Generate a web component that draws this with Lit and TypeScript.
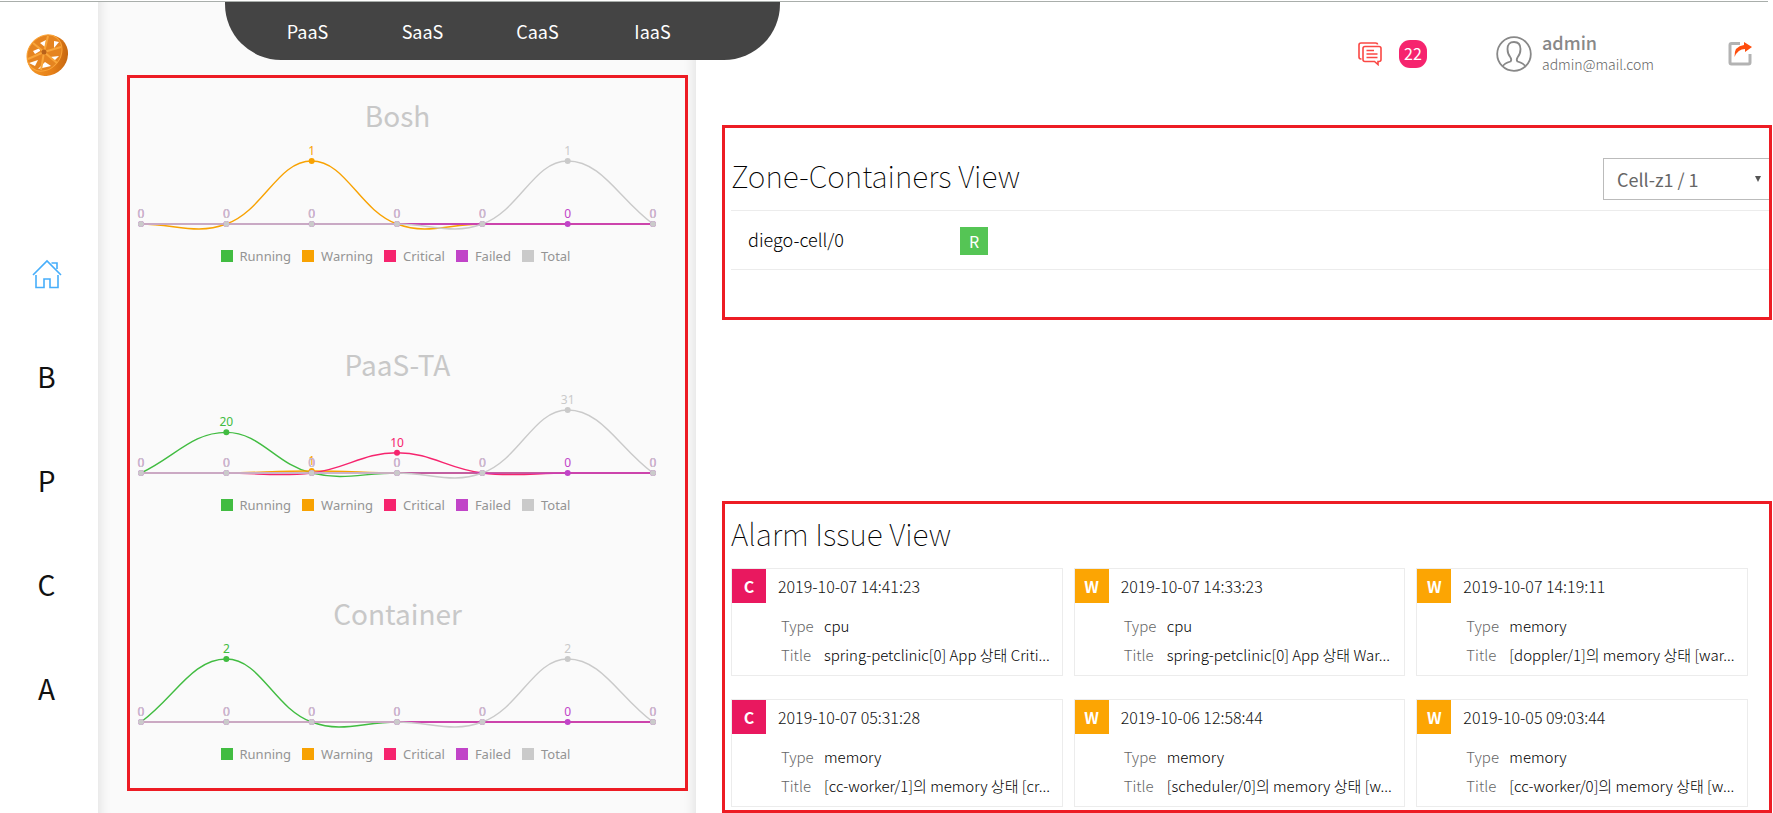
import { LitElement, html, svg, css } from "lit";
import { customElement, property } from "lit/decorators.js";

type Series = { name: string; color: string; values: number[] };
type Alarm = { level: "C" | "W"; time: string; type: string; title: string };

const COLORS: Record<string, string> = {
  Running: "#41bc41",
  Warning: "#f8a202",
  Critical: "#f6246e",
  Failed: "#c144c8",
  Total: "#cacaca",
};
const NAMES = Object.keys(COLORS);

/** Each status has its own slot on the axis; all other slots stay at zero. */
function buildSeries(counts: number[]): Series[] {
  return NAMES.map((name, i) => ({
    name,
    color: COLORS[name],
    values: [0, 1, 2, 3, 4, 5, 6].map((slot) => (slot === i + 1 ? counts[i] : 0)),
  }));
}

type Point = { x: number; y: number };

function splinePath(points: Point[], tension = 0.4): string {
  const controls = points.map((cur, i) => {
    const prev = points[i - 1] ?? cur;
    const next = points[i + 1] ?? cur;
    const before = Math.hypot(cur.x - prev.x, cur.y - prev.y);
    const after = Math.hypot(next.x - cur.x, next.y - cur.y);
    const fa = (tension * before) / (before + after);
    const fb = (tension * after) / (before + after);
    const dx = next.x - prev.x;
    const dy = next.y - prev.y;
    return {
      inX: cur.x - fa * dx,
      inY: cur.y - fa * dy,
      outX: cur.x + fb * dx,
      outY: cur.y + fb * dy,
    };
  });
  return points
    .map((p, i) =>
      i === 0
        ? `M${p.x} ${p.y}`
        : `C${controls[i - 1].outX} ${controls[i - 1].outY} ${controls[i].inX} ${controls[i].inY} ${p.x} ${p.y}`
    )
    .join("");
}

@customElement("status-chart")
export class StatusChart extends LitElement {
  @property() heading = "";
  @property({ attribute: false }) counts: number[] = [];

  static styles = css`
    :host {
      display: block;
      height: 249px;
      box-sizing: border-box;
      padding-top: 15px;
    }
    h2 {
      margin: 0;
      font-size: 28px;
      line-height: 44px;
      font-weight: 400;
      text-align: center;
      color: #c8c8c8;
    }
    .plot {
      display: block;
      width: 100%;
      font-family: "Noto Sans", sans-serif;
      font-size: 12px;
    }
    .legend {
      display: flex;
      justify-content: center;
      gap: 11px;
      margin: 0;
      padding: 0 4px 0 0;
      list-style: none;
      font-family: "Noto Sans", sans-serif;
      font-size: 13px;
      line-height: 20px;
      color: #949494;
    }
    .legend li {
      display: flex;
      align-items: center;
      gap: 7px;
    }
    .swatch {
      width: 12px;
      height: 12px;
    }
  `;

  render() {
    const series = buildSeries(this.counts);
    const max = Math.max(...this.counts, 1);
    const base = 87;
    const place = (values: number[]) =>
      values.map((v, i) => ({ x: 11 + (512 / 6) * i, y: base - (v / max) * 63 }));
    /* Zero markers of the first three series always lie under later ones. */
    const shown = (s: Series, row: number, i: number) => row > 2 || s.values[i] > 0;
    return html`
      <h2>${this.heading}</h2>
      <svg class="plot" viewBox="0 0 535 109" role="img" aria-label="${this.heading} status">
        ${series.map(
          (s) => svg`<path d=${splinePath(place(s.values))} fill="none" stroke=${s.color} stroke-width="1.4"></path>`
        )}
        ${series.map((s, row) =>
          place(s.values).map((p, i) =>
            shown(s, row, i)
              ? svg`<circle cx=${p.x} cy=${p.y} r="3" fill=${s.color}></circle>
                  <text x=${p.x} y=${p.y - 6} text-anchor="middle" fill=${s.color}>${s.values[i]}</text>`
              : null
          )
        )}
      </svg>
      <ul class="legend">
        ${series.map(
          (s) => html`<li><span class="swatch" style="background:${s.color}"></span>${s.name}</li>`
        )}
      </ul>
    `;
  }
}

@customElement("alarm-card")
export class AlarmCard extends LitElement {
  @property({ attribute: false }) alarm!: Alarm;

  static styles = css`
    :host {
      display: block;
      min-width: 0;
      border: 1px solid #ececec;
      height: 108px;
    }
    .head {
      display: flex;
      align-items: center;
      gap: 12px;
      font-size: 16px;
      line-height: 34px;
      font-weight: 300;
      color: #111;
    }
    .level {
      width: 34px;
      height: 34px;
      text-align: center;
      font-weight: 700;
      color: #fff;
      background: #fca503;
    }
    .level.critical {
      background: #e9185f;
    }
    dl {
      display: grid;
      grid-template-columns: 32px minmax(0, 1fr);
      column-gap: 11px;
      margin: 8px 4px 0 49px;
      font-size: 15px;
      line-height: 29px;
      font-weight: 300;
    }
    dt {
      color: #666;
    }
    dd {
      margin: 0;
      color: #000;
      overflow: hidden;
      white-space: nowrap;
    }
  `;

  render() {
    const a = this.alarm;
    return html`
      <div class="head">
        <span class="level ${a.level === "C" ? "critical" : ""}">${a.level}</span>
        <time>${a.time}</time>
      </div>
      <dl>
        <dt>Type</dt>
        <dd>${a.type}</dd>
        <dt>Title</dt>
        <dd>${a.title}</dd>
      </dl>
    `;
  }
}

const ALARMS: Alarm[] = [
  { level: "C", time: "2019-10-07 14:41:23", type: "cpu", title: "spring-petclinic[0] App 상태 Criti..." },
  { level: "W", time: "2019-10-07 14:33:23", type: "cpu", title: "spring-petclinic[0] App 상태 War..." },
  { level: "W", time: "2019-10-07 14:19:11", type: "memory", title: "[doppler/1]의 memory 상태 [war..." },
  { level: "C", time: "2019-10-07 05:31:28", type: "memory", title: "[cc-worker/1]의 memory 상태 [cr..." },
  { level: "W", time: "2019-10-06 12:58:44", type: "memory", title: "[scheduler/0]의 memory 상태 [w..." },
  { level: "W", time: "2019-10-05 09:03:44", type: "memory", title: "[cc-worker/0]의 memory 상태 [w..." },
];

@customElement("app-root")
export class AppRoot extends LitElement {
  static styles = css`
    :host {
      display: block;
      position: relative;
      font-family: "Noto Sans CJK KR", sans-serif;
      color: #222;
      background: #fff;
    }
    * {
      box-sizing: border-box;
    }
    a {
      color: inherit;
      text-decoration: none;
    }
    svg {
      display: block;
    }
    .edge {
      height: 2px;
      margin-right: 5px;
      border-bottom: 1px solid #a9aeab;
    }
    .layout {
      display: grid;
      grid-template-columns: 98px 598px minmax(0, 1fr);
      min-height: calc(100vh - 2px);
    }
    .rail {
      display: flex;
      flex-direction: column;
      align-items: center;
      padding: 32px 5px 0 0;
    }
    .logo {
      margin-bottom: 183px;
    }
    .rail nav {
      display: flex;
      flex-direction: column;
      align-items: center;
      gap: 64px;
      font-size: 28px;
      line-height: 40px;
      color: #111;
    }
    .home {
      height: 33px;
    }
    .charts {
      padding: 73px 8px 22px 29px;
      background: #fafafa;
      box-shadow: inset 14px 0 12px -12px rgba(0, 0, 0, 0.1), inset -14px 0 12px -12px rgba(0, 0, 0, 0.1);
    }
    .frame {
      border: 3px solid #ed1c24;
    }
    .charts .frame {
      height: 716px;
      padding-right: 20px;
    }
    .services {
      position: absolute;
      top: 2px;
      left: 225px;
      display: flex;
      height: 58px;
      padding: 0 70px 0 25px;
      border-radius: 0 0 56px 56px;
      background: #444;
      color: #fff;
      font-size: 18px;
      line-height: 58px;
      text-align: center;
    }
    .services a {
      width: 115px;
    }
    .main {
      padding: 0 1px 0 26px;
    }
    header {
      display: flex;
      align-items: center;
      justify-content: flex-end;
      height: 123px;
      padding: 0 19px 20px 0;
    }
    .messages {
      display: flex;
      align-items: center;
      gap: 17px;
      margin-right: 69px;
    }
    .count {
      width: 28px;
      height: 28px;
      border-radius: 11px;
      background: #f6246e;
      color: #fff;
      font-size: 16px;
      line-height: 27px;
      text-align: center;
    }
    .user {
      display: flex;
      align-items: center;
      gap: 10px;
      margin-right: 74px;
      color: #888;
    }
    .account {
      padding-bottom: 3px;
    }
    .name {
      font-size: 18px;
      line-height: 24px;
      font-weight: 500;
    }
    .mail {
      font-size: 14px;
      line-height: 20px;
      font-weight: 300;
      color: #666;
    }
    .zone {
      height: 195px;
      margin-bottom: 181px;
      padding: 30px 0 0 6px;
    }
    .title-row {
      display: flex;
      align-items: flex-start;
      justify-content: space-between;
      height: 52px;
    }
    h1 {
      margin: 0;
      font-size: 30px;
      line-height: 34px;
      font-weight: 100;
      color: #000;
    }
    select {
      appearance: none;
      width: 166px;
      height: 42px;
      padding: 0 30px 0 13px;
      border: 1px solid #bbb;
      border-right: 0;
      border-radius: 0;
      background: transparent;
      font-family: inherit;
      font-size: 18px;
      color: #666;
    }
    .select {
      display: grid;
      align-items: center;
    }
    .select > * {
      grid-area: 1 / 1;
    }
    .arrow {
      justify-self: end;
      margin-right: 8px;
      pointer-events: none;
    }
    table {
      width: 100%;
      border-collapse: collapse;
    }
    tr {
      border-top: 1px solid #ececec;
      border-bottom: 1px solid #ececec;
    }
    td {
      height: 59px;
      padding: 2px 0 0;
      font-size: 18px;
      font-weight: 300;
      color: #000;
    }
    .cell-name {
      width: 229px;
      padding: 0 0 2px 17px;
    }
    .badge {
      display: block;
      width: 28px;
      height: 28px;
      background: #55c555;
      color: #fff;
      font-size: 16px;
      line-height: 28px;
      font-weight: 400;
      text-align: center;
    }
    .alarms {
      height: 312px;
      padding: 12px 21px 0 6px;
    }
    .cards {
      display: grid;
      grid-template-columns: repeat(3, minmax(0, 1fr));
      gap: 23px 11px;
      margin-top: 18px;
    }
  `;

  render() {
    return html`
      <div class="edge"></div>
      <div class="layout">
        <aside class="rail">
          <a class="logo" href="#" aria-label="Main page">${this.logo()}</a>
          <nav>
            <a class="home" href="#" aria-label="Home">
              <svg width="30" height="30" viewBox="0 0 30 30" fill="none" stroke="#47aefb" stroke-width="1.6">
                <path d="M1 16 15 2 29 16"></path>
                <path d="M4 16V28.500H12V20H18V28.500H26V16"></path>
                <path d="M19.500 4H25V10"></path>
              </svg>
            </a>
            <a href="#">B</a>
            <a href="#">P</a>
            <a href="#">C</a>
            <a href="#">A</a>
          </nav>
        </aside>
        <section class="charts">
          <div class="frame">
            <status-chart heading="Bosh" .counts=${[0, 1, 0, 0, 1]}></status-chart>
            <status-chart heading="PaaS-TA" .counts=${[20, 1, 10, 0, 31]}></status-chart>
            <status-chart heading="Container" .counts=${[2, 0, 0, 0, 2]}></status-chart>
          </div>
        </section>
        <main class="main">
          <header>
            <div class="messages">
              <svg width="24" height="24" viewBox="0 0 24 24" fill="none" stroke="#fa4844" stroke-width="1.6">
                <path d="M3.500 17H3Q1 17 1 15V3Q1 1 3 1H17.500Q19.500 1 19.500 2.500"></path>
                <path d="M7 4.500H21Q23 4.500 23 6.500V17.500Q23 19.500 21 19.500H20V22.500L16.500 19.500H7Q5 19.500 5 17.500V6.500Q5 4.500 7 4.500Z"></path>
                <path d="M8.500 8.500H16M8.500 12H19.500M8.500 15.500H19.500"></path>
              </svg>
              <span class="count">22</span>
            </div>
            <div class="user">
              <svg width="36" height="36" viewBox="0 0 36 36" fill="none" stroke="#888" stroke-width="1.8">
                <circle cx="18" cy="18" r="16.800"></circle>
                <path d="M7 30Q8 27.500 14.500 25.500Q16 24 14.500 21.500Q11.500 18 11.500 13Q11.500 6 18 6Q24.500 6 24.500 13Q24.500 18 21.500 21.500Q20 24 21.500 25.500Q28 27.500 29 30"></path>
              </svg>
              <div class="account">
                <div class="name">admin</div>
                <div class="mail">admin@mail.com</div>
              </div>
            </div>
            <a href="#" aria-label="Log out">
              <svg width="25" height="25" viewBox="0 0 25 25">
                <path d="M12 2.500H3.500Q2 2.500 2 4V21.500Q2 23 3.500 23H20.500Q22 23 22 21.500V13" fill="none" stroke="#b3b3b3" stroke-width="3"></path>
                <path d="M16 1 24 6 17 11V8Q10 8 6.500 16Q6 5 16 4Z" fill="#ff4d0d"></path>
              </svg>
            </a>
          </header>
          <section class="frame zone">
            <div class="title-row">
              <h1>Zone-Containers View</h1>
              <div class="select">
                <select aria-label="Zone">
                  <option>Cell-z1 / 1</option>
                </select>
                <svg class="arrow" width="6" height="6" viewBox="0 0 6 6"><path d="M0 0H6L3 6Z" fill="#555"></path></svg>
              </div>
            </div>
            <table>
              <tr>
                <td class="cell-name">diego-cell/0</td>
                <td><span class="badge">R</span></td>
              </tr>
            </table>
          </section>
          <section class="frame alarms">
            <h1>Alarm Issue View</h1>
            <div class="cards">${ALARMS.map((a) => html`<alarm-card .alarm=${a}></alarm-card>`)}</div>
          </section>
        </main>
      </div>
      <nav class="services">
        <a href="#">PaaS</a>
        <a href="#">SaaS</a>
        <a href="#">CaaS</a>
        <a href="#">IaaS</a>
      </nav>
    `;
  }

  private logo() {
    return html`
      <svg width="42" height="42" viewBox="0 0 42 42">
        <defs>
          <linearGradient id="rim" x1="0" y1="0" x2="1" y2="1">
            <stop offset="0" stop-color="#fba12c"></stop>
            <stop offset="0.6" stop-color="#e57f18"></stop>
            <stop offset="1" stop-color="#b45a0c"></stop>
          </linearGradient>
        </defs>
        <ellipse cx="21.500" cy="21.500" rx="21.500" ry="19.500" transform="rotate(-45 21.500 21.500)" fill="url(#rim)"></ellipse>
        <ellipse cx="18.500" cy="19" rx="19.500" ry="16" transform="rotate(-50 18.500 19)" fill="#e58420" stroke="#fba63a" stroke-width="1"></ellipse>
        <g fill="#fff">
          <path d="M14 9 20 6 19 13Z"></path>
          <path d="M28 7 33 8 28 14Z"></path>
          <path d="M7 17 14 14 14 17 9 20Z"></path>
          <path d="M24 23 33 22 28 27Z"></path>
          <path d="M3 29 12 26 9 32Z"></path>
          <path d="M19 28 25 32 12 35Z"></path>
        </g>
        <path d="M18 18 22 2M18 18 35 13M18 18 31 29M18 18 15 36M18 18 2 25M18 18 7 9" stroke="#f9a63a" stroke-width="2"></path>
        <circle cx="18" cy="18" r="2.500" fill="#b8621a"></circle>
      </svg>
    `;
  }
}
